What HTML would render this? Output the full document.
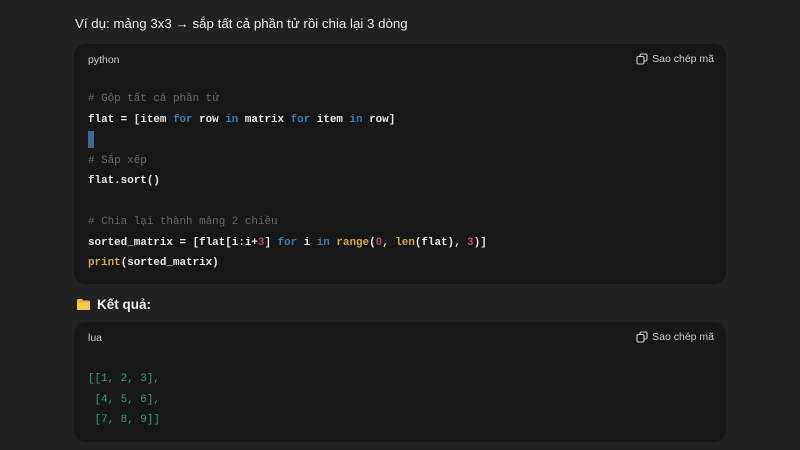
<!DOCTYPE html>
<html><head><meta charset="utf-8"><style>
*{margin:0;padding:0;box-sizing:border-box}
body{width:800px;height:450px;background:#212121;overflow:hidden;font-family:"Liberation Sans",sans-serif;color:#ececec;position:relative}
.t{position:absolute;left:75px;top:16px;font-size:13.3px}
.blk{position:absolute;left:74px;width:652px;background:#171717;border-radius:12px}
.lang{position:absolute;left:14px;top:10px;font-size:10.5px;color:#cfcfcf}
.copy{position:absolute;right:12px;top:9px;font-size:10.5px;color:#cfcfcf;display:flex;align-items:center;gap:4px}
pre{position:absolute;left:14px;font-family:"Liberation Mono",monospace;font-size:10.9px;line-height:20.5px;color:#e8e8e8;font-weight:bold}
.c{color:#6a6a6a;font-weight:normal}.k{color:#2f7fb8}.f{color:#d6a84a}.n{color:#c2466a}.g{color:#2ea37a;font-weight:normal}
.cur{display:inline-block;width:6px;height:17px;background:#3d6a96;vertical-align:middle}
.h{position:absolute;left:76px;top:297px;font-size:13.5px;font-weight:bold;display:flex;align-items:center;gap:6px}
</style></head><body>
<div class="t">Ví dụ: mảng 3x3 → sắp tất cả phần tử rồi chia lại 3 dòng</div>
<div class="blk" style="top:44px;height:240px">
<div class="lang">python</div>
<div class="copy"><svg width="12" height="12" viewBox="0 0 12 12" fill="none" stroke="#cfcfcf" stroke-width="1.1"><rect x="1" y="3.5" width="7" height="7.5" rx="1.5"/><path d="M4 3.5V2.5A1.5 1.5 0 0 1 5.5 1H9.5A1.5 1.5 0 0 1 11 2.5V6.5A1.5 1.5 0 0 1 9.5 8H8"/></svg>Sao chép mã</div>
<pre style="top:45px"><span class="c"># Gộp tất cả phần tử</span>
flat = [item <span class="k">for</span> row <span class="k">in</span> matrix <span class="k">for</span> item <span class="k">in</span> row]
<span class="cur"></span>
<span class="c"># Sắp xếp</span>
flat.sort()

<span class="c"># Chia lại thành mảng 2 chiều</span>
sorted_matrix = [flat[i:i+<span class="n">3</span>] <span class="k">for</span> i <span class="k">in</span> <span class="f">range</span>(<span class="n">0</span>, <span class="f">len</span>(flat), <span class="n">3</span>)]
<span class="f">print</span>(sorted_matrix)</pre>
</div>
<div class="h"><svg width="15" height="13" viewBox="0 0 15 13"><path d="M1 2.5Q1 1 2.5 1H6L7.5 2.5H12.5Q14 2.5 14 4V11Q14 12 13 12H2Q1 12 1 11Z" fill="#f2b736"/><path d="M1 5H14V11Q14 12 13 12H2Q1 12 1 11Z" fill="#f7c948"/></svg>Kết quả:</div>
<div class="blk" style="top:322px;height:120px">
<div class="lang">lua</div>
<div class="copy"><svg width="12" height="12" viewBox="0 0 12 12" fill="none" stroke="#cfcfcf" stroke-width="1.1"><rect x="1" y="3.5" width="7" height="7.5" rx="1.5"/><path d="M4 3.5V2.5A1.5 1.5 0 0 1 5.5 1H9.5A1.5 1.5 0 0 1 11 2.5V6.5A1.5 1.5 0 0 1 9.5 8H8"/></svg>Sao chép mã</div>
<pre style="top:47px" class="g">[[1, 2, 3],
 [4, 5, 6],
 [7, 8, 9]]</pre>
</div>
</body></html>
